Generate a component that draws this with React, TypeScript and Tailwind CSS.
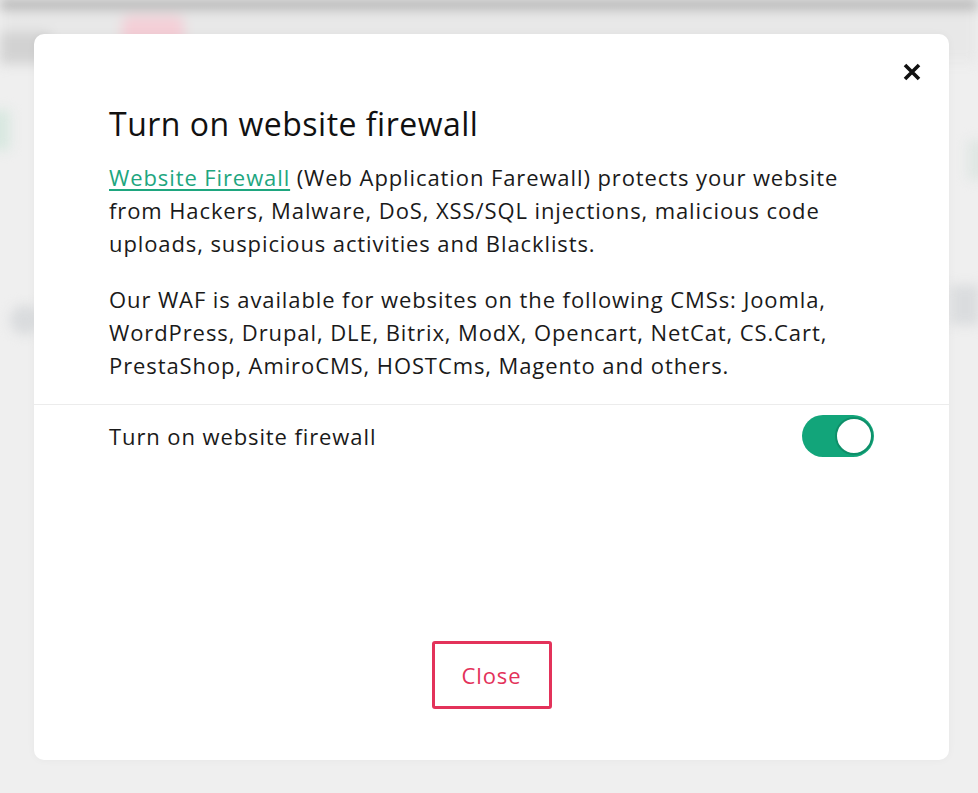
import React from "react";

export default function App() {
  return (
    <div
      className="relative w-[978px] h-[793px] overflow-hidden bg-[#efefef]"
      style={{ fontFamily: '"Open Sans", "Noto Sans", sans-serif' }}
    >
      {/* blurred background page */}
      <div className="absolute inset-0 blur-[6px]">
        <div className="absolute left-0 top-0 w-full h-[12px] bg-gradient-to-b from-[#8f8f8f] to-[#e4e4e4]" />
        <div className="absolute left-0 top-[12px] w-full h-[50px] bg-[#e8e8e8]" />
        <div className="absolute left-[122px] top-[16px] w-[62px] h-[58px] rounded-[8px] bg-[#f4cfd7]" />
        <div className="absolute left-[0px] top-[32px] w-[50px] h-[32px] bg-[#d2d2d2]" />
        <div className="absolute left-[-10px] top-[110px] w-[20px] h-[40px] bg-[#d8e8e0]" />
        <div className="absolute left-[968px] top-[140px] w-[20px] h-[40px] bg-[#dfe6e3]" />
        <div className="absolute left-[10px] top-[305px] w-[30px] h-[30px] rounded-full bg-[#d9dbdd]" />
        <div className="absolute left-[950px] top-[285px] w-[30px] h-[40px] bg-[#dadcde]" />
      </div>

      <div className="relative ml-[34px] mt-[34px] w-[915px] h-[726px] bg-white rounded-[10px] flex flex-col shadow-[0_0_8px_rgba(0,0,0,0.04)]">
        {/* close icon */}
        <button className="absolute right-[26px] top-[27px] w-[22px] h-[22px] flex items-center justify-center">
          <svg width="20" height="20" viewBox="0 0 20 20">
            <path d="M3 3 L17 17 M17 3 L3 17" stroke="#111" strokeWidth="3.6" strokeLinecap="butt" />
          </svg>
        </button>

        <div className="pt-[70px] px-[75px]">
          <h2 className="text-[32px] leading-[40px] tracking-[0.5px] text-[#111] font-normal">Turn on website firewall</h2>
          <p className="mt-[17px] text-[22px] leading-[33px] tracking-[0.9px] text-[#1a1a1a]">
            <a href="#" className="text-[#1ea67f] underline underline-offset-[3px] decoration-[1.5px]">
              Website Firewall
            </a>{" "}
            (Web Application Farewall) protects your website from Hackers, Malware, DoS, XSS/SQL injections,
            malicious code uploads, suspicious activities and Blacklists.
          </p>
          <p className="mt-[23px] text-[22px] leading-[33px] tracking-[0.9px] text-[#1a1a1a]">
            Our WAF is available for websites on the following CMSs: Joomla, WordPress, Drupal, DLE, Bitrix, ModX,
            Opencart, NetCat, CS.Cart, PrestaShop, AmiroCMS, HOSTCms, Magento and others.
          </p>
        </div>

        <div className="mt-[22px] h-px bg-[#ececec]" />

        <div className="px-[75px] pt-[9px] flex items-center justify-between">
          <span className="text-[22px] leading-[44px] tracking-[0.9px] text-[#1a1a1a]">Turn on website firewall</span>
          <div className="w-[72px] h-[42px] rounded-full bg-[#12a57a] flex items-center justify-end pr-[1px]">
            <div className="w-[38px] h-[38px] rounded-full bg-white border-[2px] border-[#0e8f69]" />
          </div>
        </div>

        <div className="flex-1" />

        <div className="flex justify-center pb-[51px]">
          <button className="w-[120px] h-[68px] border-[3px] border-[#e3325a] rounded-[3px] text-[22px] tracking-[0.9px] text-[#e3325a]">
            Close
          </button>
        </div>
      </div>
    </div>
  );
}
